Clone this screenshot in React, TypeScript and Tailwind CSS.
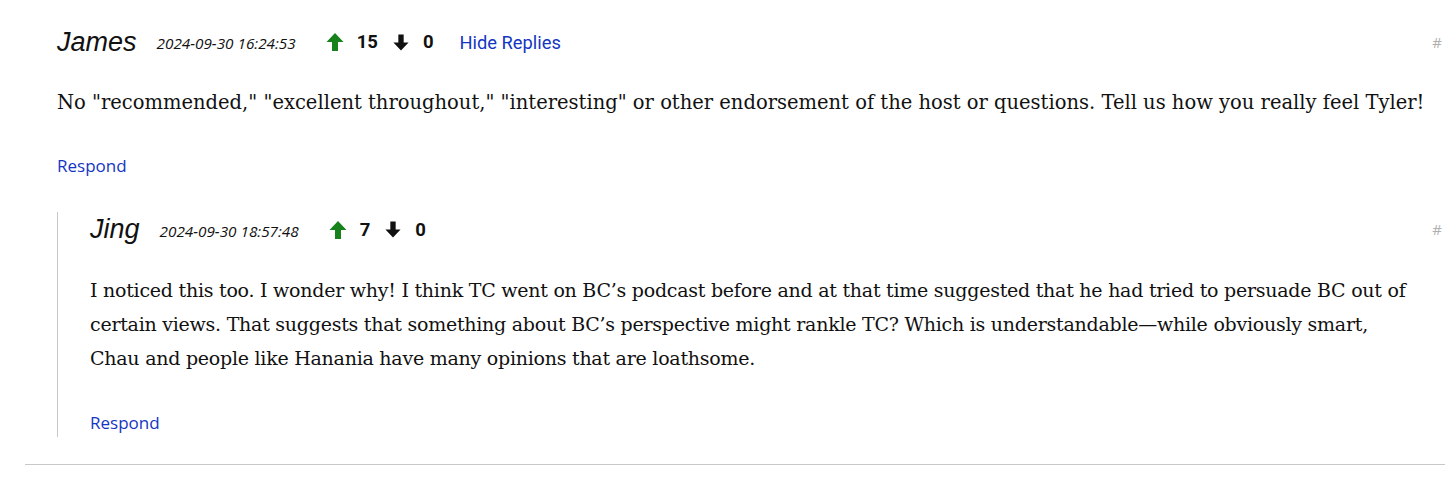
const serif = { fontFamily: '"DejaVu Serif", "Liberation Serif", serif' };

function Arrow({ up, className }: { up?: boolean; className: string }) {
  return (
    <svg
      viewBox="0 0 18 20"
      className={className}
      style={up ? undefined : { transform: "rotate(180deg)" }}
    >
      <path d="M9 1 L17.5 10 L12 10 L12 19 L6 19 L6 10 L0.5 10 Z" fill="currentColor" />
    </svg>
  );
}

function Meta({
  name,
  date,
  up,
  down,
  extra,
}: {
  name: string;
  date: string;
  up: number;
  down: number;
  extra?: string;
}) {
  return (
    <div className="flex items-center h-[30px]">
      <span className="italic text-[27px] text-[#111] font-['Liberation_Sans',sans-serif] mr-[20px]">
        {name}
      </span>
      <span className="italic text-[15.3px] text-[#111] font-['Open_Sans',sans-serif] mt-[3px]">
        {date}
      </span>
      <Arrow up className="ml-[30px] w-[18px] h-[20px] text-[#17821b]" />
      <span className="ml-[13px] mt-[2px] font-bold text-[18.5px] text-[#111] font-['Roboto',sans-serif]">{up}</span>
      <Arrow className="ml-[15px] w-[16px] h-[19px] text-[#111]" />
      <span className="ml-[14px] mt-[2px] font-bold text-[18.5px] text-[#111] font-['Roboto',sans-serif]">{down}</span>
      {extra && (
        <a className="ml-[26px] mt-[2px] text-[18.3px] text-[#1436c2] font-['Roboto',sans-serif]">{extra}</a>
      )}
      <span className="ml-auto mr-[3px] text-[15px] text-[#b0b0b0] font-['Open_Sans',sans-serif]">#</span>
    </div>
  );
}

export default function App() {
  return (
    <div className="bg-white w-[1456px] h-[490px] pl-[25px] pr-[11px] pt-[27px]">
      <div className="pl-[32px] pb-[27px] border-b border-[#c8c8c8]">
        <Meta name="James" date="2024-09-30 16:24:53" up={15} down={0} extra="Hide Replies" />
        <p className="mt-[31px] text-[19.5px] leading-[30px] text-[#111]" style={serif}>
          No "recommended," "excellent throughout," "interesting" or other endorsement of the host or
          questions. Tell us how you really feel Tyler!
        </p>
        <a className="block mt-[35px] text-[17px] text-[#1436c2] font-['Open_Sans',sans-serif]">Respond</a>
        <div className="mt-[33px] border-l border-[#c8c8c8] pl-[32px] pt-[3px] pb-[2px]">
          <Meta name="Jing" date="2024-09-30 18:57:48" up={7} down={0} />
          <p
            className="mt-[28px] text-[19px] leading-[34px] tracking-[-0.25px] text-[#111] whitespace-nowrap"
            style={serif}
          >
            I noticed this too. I wonder why! I think TC went on BC’s podcast before and at that time
            suggested that he had tried to persuade BC out of
            <br />
            certain views. That suggests that something about BC’s perspective might rankle TC? Which is
            understandable—while obviously smart,
            <br />
            Chau and people like Hanania have many opinions that are loathsome.
          </p>
          <a className="block mt-[35px] text-[17px] text-[#1436c2] font-['Open_Sans',sans-serif]">Respond</a>
        </div>
      </div>
    </div>
  );
}
